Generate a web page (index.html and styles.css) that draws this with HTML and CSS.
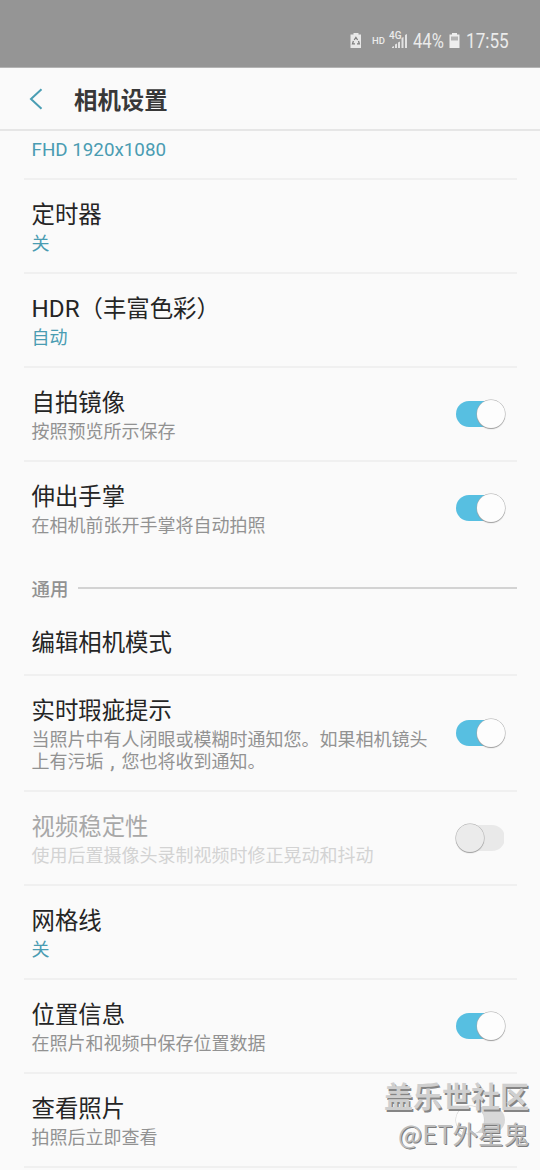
FILE: index.html
```html
<!DOCTYPE html>
<html lang="zh-CN">
<head>
<meta charset="utf-8">
<title>相机设置</title>
<link rel="stylesheet" href="styles.css">
</head>
<body>
<div class="status">
  <svg class="saver" width="12" height="17" viewBox="0 0 12 17"><path fill="#e8e8e8" d="M3.500 1h5v1.500h2.500V16H.5V2.500h3z"/><path d="M4.200 8l1.700-2.500L7.600 8M8.500 9l.8 2.800H7M5 11.800H2.500L3.400 9" fill="none" stroke="#808080" stroke-width="1.300"/></svg>
  <span class="hd">HD</span>
  <div class="net"><span class="gen">4G</span>
    <svg width="19" height="17" viewBox="0 0 19 17"><path fill="#e2e2e2" d="M3 16v-1l2-1v2zM6 16v-3.500l2-1V16zM9 16v-5.500l2-1V16zM12.500 16V6l2-1v11zM16 16V3l2-1v14z"/></svg>
  </div>
  <span class="pct">44%</span>
  <svg class="batt" width="11" height="17" viewBox="0 0 11 17"><path fill="#eee" d="M3 1h5v1.500h2.500V16H.5V2.500H3z"/><path fill="#b4b4b4" d="M2 4.500h7v4H2z"/></svg>
  <span class="clock">17:55</span>
</div>
<header class="bar">
  <svg class="back" width="14" height="24" viewBox="0 0 14 24"><path d="M12.500 2.200L2 12l10.500 9.800" fill="none" stroke="#4a9eb4" stroke-width="2"/></svg>
  <h1>相机设置</h1>
</header>
<main>
  <div class="row first"><div class="text"><p class="sub value">FHD 1920x1080</p></div></div>
  <div class="row"><div class="text"><p class="title">定时器</p><p class="sub value">关</p></div></div>
  <div class="row"><div class="text"><p class="title"><span class="latin">HDR</span>（丰富色彩）</p><p class="sub value">自动</p></div></div>
  <div class="row"><div class="text"><p class="title">自拍镜像</p><p class="sub">按照预览所示保存</p></div><i class="switch on"></i></div>
  <div class="row last"><div class="text"><p class="title">伸出手掌</p><p class="sub">在相机前张开手掌将自动拍照</p></div><i class="switch on"></i></div>
  <div class="section"><h2>通用</h2><span class="rule"></span></div>
  <div class="row single"><div class="text"><p class="title">编辑相机模式</p></div></div>
  <div class="row"><div class="text"><p class="title">实时瑕疵提示</p><p class="sub">当照片中有人闭眼或模糊时通知您。如果相机镜头<br>上有污垢<span class="comma">,</span>您也将收到通知。</p></div><i class="switch on"></i></div>
  <div class="row disabled"><div class="text"><p class="title">视频稳定性</p><p class="sub">使用后置摄像头录制视频时修正晃动和抖动</p></div><i class="switch"></i></div>
  <div class="row"><div class="text"><p class="title">网格线</p><p class="sub value">关</p></div></div>
  <div class="row"><div class="text"><p class="title">位置信息</p><p class="sub">在照片和视频中保存位置数据</p></div><i class="switch on"></i></div>
  <div class="row"><div class="text"><p class="title">查看照片</p><p class="sub">拍照后立即查看</p></div><i class="switch off"></i></div>
</main>
<div class="watermark"><div class="site">盖乐世社区</div><div class="user">@ET外星鬼</div></div>
</body>
</html>
```

FILE: styles.css
```css
* { box-sizing: border-box; }
body {
  margin: 0;
  width: 540px;
  height: 1170px;
  overflow: hidden;
  position: relative;
  background: #fafafa;
  color: #252525;
  font-family: Roboto, "Noto Sans CJK SC", sans-serif;
}
h1, h2, p { margin: 0; }
svg { display: block; flex: none; }
.status {
  height: 68px;
  background: #959595;
  border-bottom: 1px solid #b4b4b4;
  color: #ebebeb;
  display: flex;
  align-items: center;
  padding: 15px 0 0 350px;
  white-space: nowrap;
}
.saver, .batt { margin-top: -2px; }
.hd { font-size: 9.500px; font-weight: 500; margin: -2px 0 0 10px; width: 17px; }
.net { width: 21px; height: 17px; display: flex; position: relative; margin-top: -1px; }
.gen { position: absolute; left: 0; top: -1px; font-size: 10px; line-height: 10px; font-weight: 500; }
.pct { font-size: 19.500px; width: 36px; margin-left: 3px; transform: scaleX(.85); transform-origin: left; }
.clock { font-size: 19.500px; margin-left: 6px; transform: scaleX(.88); transform-origin: left; }
.bar {
  height: 63px;
  display: flex;
  align-items: center;
  padding-left: 29px;
  border-bottom: 2px solid #e6e6e6;
}
.bar h1 { margin-left: 31px; padding-top: 5px; font-size: 23.400px; line-height: 30px; font-weight: 700; color: #383838; }
main { padding: 0 23px 0 24px; }
.row {
  display: flex;
  justify-content: space-between;
  align-items: center;
  padding: 17px 12px 17px 7.500px;
  border-bottom: 2px solid #f0f0f0;
}
.row.first { padding: 6px 0 18px 7.500px; height: 49px; }
.first .sub { font-size: 18.800px; }
.row.last { border-bottom-color: transparent; }
.row.single { padding-bottom: 15px; }
.text { white-space: nowrap; padding-top: 2px; }
.title { font-size: 23.400px; line-height: 32px; }
.latin { font-size: 24.200px; line-height: 1; }
.sub { font-size: 18px; line-height: 22px; color: #929292; }
.title + .sub { margin-top: 2px; }
.value { color: #4a9cb2; }
.disabled .title { color: #a8a8a8; }
.disabled .sub { color: #d3d3d3; }
.comma { display: inline-block; width: 18px; text-align: center; font-size: 22px; line-height: 16px; }
.switch {
  flex: none;
  display: flex;
  align-items: center;
  width: 49px;
  height: 26px;
  border-radius: 13px;
  background: linear-gradient(#e9e9e9, #e9e9e9) 0 0 / 48px 26px no-repeat;
}
.switch::before {
  content: "";
  width: 28px;
  height: 28px;
  flex: none;
  border-radius: 50%;
  background: #ebebeb;
  box-shadow: 0 0 0 .5px #aaa, 0 1px 1px #999;
}
.switch.on { background: #57bfe1; justify-content: flex-end; }
.switch.on::before { background: #fdfdfd; }
.switch.off { background: #d8d8d8; }
.switch.off::before { background: #fdfdfd; box-shadow: 0 0 0 .5px #ccc; }
.section { height: 52px; display: flex; align-items: center; padding: 12px 0 0 7.500px; }
.section h2 { padding-top: 3px; font-size: 18.500px; line-height: 22px; font-weight: 500; color: #929292; }
.rule { height: 2px; flex: 1; margin-left: 9px; background: #d3d3d3; }
.watermark {
  position: absolute;
  right: 11px;
  bottom: 18px;
  text-align: right;
  white-space: nowrap;
  color: #cfcfcf;
  text-shadow: 1.500px 1.500px 0 #858585;
  font-family: "Noto Sans CJK SC", sans-serif;
}
.site { font-size: 29px; line-height: 38px; font-weight: 700; }
.user { font-size: 25.500px; line-height: 38px; color: #bdbdbd; text-shadow: 1px 1px 0 #7d7d7d; }
```
